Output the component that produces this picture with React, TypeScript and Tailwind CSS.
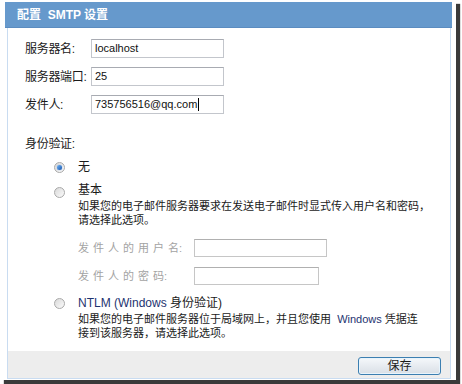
import React from "react";

const font = "font-['Liberation_Sans','Noto_Sans_CJK_SC',sans-serif]";

const Field = ({ label, value, caret }: { label: string; value: string; caret?: boolean }) => {
  return (
    <div className="flex items-center h-[19px]">
      <div className="w-[66px] text-[12px] tracking-[-0.3px] text-[#1a1a1a]">{label}</div>
      <div
        className={
          "w-[133px] h-[19px] flex items-center pl-[3px] text-[11px] text-[#111] bg-white border border-[#c3c6cc] border-t-[#a8abb2] " +
          (caret ? "border-[#9aa3b3]" : "")
        }
      >
        {value}
        {caret && <span className="inline-block w-px h-[13px] bg-black ml-px" />}
      </div>
    </div>
  );
};

const Radio = ({ checked }: { checked?: boolean }) => {
  return (
    <div className="w-[11px] h-[11px] rounded-full border border-[#a9a9a9] bg-gradient-to-br from-[#d9d9d9] to-[#fbfbfb] flex items-center justify-center">
      {checked && (
        <div className="w-[5px] h-[5px] rounded-full bg-gradient-to-br from-[#6fb2f2] to-[#1657b0] shadow-[0_0_1px_#2d6fd0]" />
      )}
    </div>
  );
};

const SubField = ({ label, width }: { label: string; width: string }) => {
  // spacing between the characters only, not before the colon
  const head = label.slice(0, -1);
  const last = label.slice(-1);
  return (
    <div className="flex items-center h-[18px]">
      <div className="w-[116px] text-[11px] text-[#a3a3a3] whitespace-nowrap">
        <span className="tracking-[4px]">{head}</span>
        {last}:
      </div>
      <div className={"h-[18px] bg-white border border-[#c6c6c6] border-t-[#b0b0b0] " + width} />
    </div>
  );
};

export default function App() {
  return (
    <div className={"w-[462px] h-[384px] bg-white " + font}>
      <div className="w-[456px] h-[380px] bg-white shadow-[4px_4px_1px_#3a3a3a] pt-[2px] pl-[5px]">
        <div className="w-[447px] h-[377px] flex flex-col">
          {/* title */}
          <div className="h-[26px] bg-[#6699cc] border-b border-[#5b8cc0] flex items-center pl-[12px] text-white text-[12px] font-bold">
            配置&nbsp;&nbsp;SMTP 设置
          </div>

          <div className="flex-1 flex flex-col ml-[2px] mr-px border-x border-b border-[#c9dcf1]">
            {/* main content */}
            <div className="flex-1 bg-white pl-[17px] pt-[11px] text-[#1a1a1a]">
              <div className="flex flex-col gap-[9px]">
                <Field label="服务器名:" value="localhost" />
                <Field label="服务器端口:" value="25" />
                <Field label="发件人:" value="735756516@qq.com" caret />
              </div>

              <div className="mt-[23px] text-[12px] leading-[14px] tracking-[-0.3px]">身份验证:</div>

              <div className="pl-[29px] mt-[8px] flex flex-col">
                <div className="flex items-center h-[16px]">
                  <div className="w-[24px]">
                    <Radio checked />
                  </div>
                  <span className="text-[12px]">无</span>
                </div>

                <div className="flex mt-[6px]">
                  <div className="w-[24px] pt-[6px]">
                    <Radio />
                  </div>
                  <div className="flex flex-col">
                    <div className="text-[12px] leading-[18px]">基本</div>
                    <div className="text-[11px] leading-[14px] whitespace-nowrap">
                      如果您的电子邮件服务器要求在发送电子邮件时显式传入用户名和密码，
                      <br />
                      请选择此选项。
                    </div>
                    <div className="flex flex-col gap-[10px] mt-[12px]">
                      <SubField label="发件人的用户名" width="w-[133px]" />
                      <SubField label="发件人的密码" width="w-[125px]" />
                    </div>
                  </div>
                </div>

                <div className="flex mt-[10px]">
                  <div className="w-[24px] pt-[3px]">
                    <Radio />
                  </div>
                  <div className="flex flex-col">
                    <div className="text-[12px] leading-[17px] whitespace-nowrap">
                      <span className="text-[#1e3370]">NTLM (Windows </span>身份验证)
                    </div>
                    <div className="text-[11px] leading-[14px] whitespace-nowrap">
                      如果您的电子邮件服务器位于局域网上，并且您使用&nbsp;&nbsp;<span className="text-[#1e3370]">Windows</span>&nbsp;凭据连
                      <br />
                      接到该服务器，请选择此选项。
                    </div>
                  </div>
                </div>
              </div>
            </div>

            {/* footer */}
            <div className="h-[27px] bg-[#ededed] flex justify-end items-start pt-[6px] pr-[9px]">
              <button className="w-[83px] h-[18px] rounded-[3px] border border-[#3c7fb1] bg-gradient-to-b from-[#f5f8fb] to-[#d9dfe6] shadow-[inset_0_0_0_1px_#e8f4fc] text-[12px] leading-none text-[#1a1a1a] flex items-center justify-center">
                保存
              </button>
            </div>
          </div>
        </div>
      </div>
    </div>
  );
}
